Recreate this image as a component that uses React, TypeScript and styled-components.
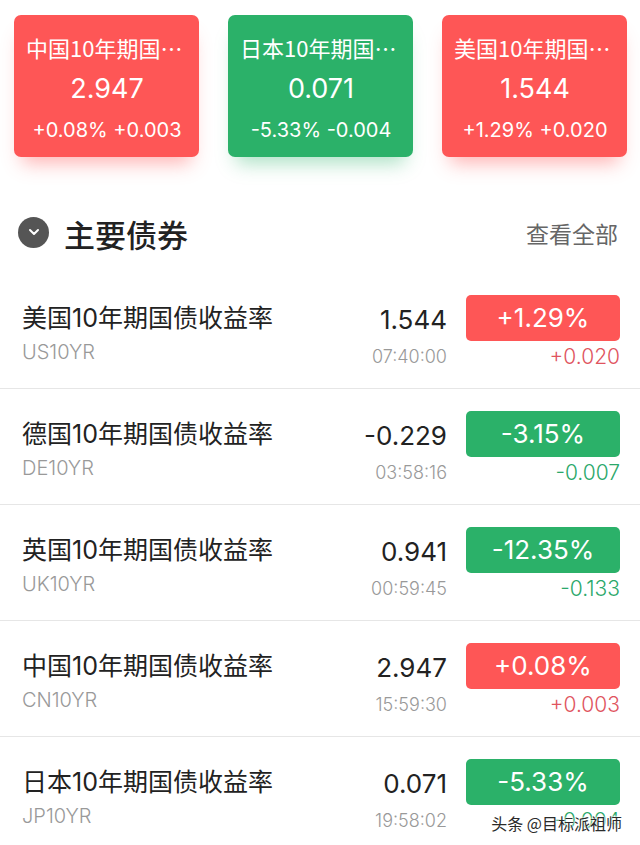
import styled, { createGlobalStyle } from "styled-components";

const GlobalStyle = createGlobalStyle`
  html, body {
    margin: 0;
    padding: 0;
    background: #ffffff;
  }
  body {
    font-family: "Inter", "Noto Sans CJK SC", sans-serif;
    -webkit-font-smoothing: antialiased;
  }
`;

const RED = "#fe5656";
const GREEN = "#2bb169";

type Trend = "up" | "down";

interface Bond {
  name: string;
  code: string;
  price: string;
  time: string;
  percent: string;
  change: string;
  trend: Trend;
}

const cards: Bond[] = [
  { name: "中国10年期国债收益率", code: "CN10YR", price: "2.947", time: "15:59:30", percent: "+0.08%", change: "+0.003", trend: "up" },
  { name: "日本10年期国债收益率", code: "JP10YR", price: "0.071", time: "19:58:02", percent: "-5.33%", change: "-0.004", trend: "down" },
  { name: "美国10年期国债收益率", code: "US10YR", price: "1.544", time: "07:40:00", percent: "+1.29%", change: "+0.020", trend: "up" },
];

const bonds: Bond[] = [
  cards[2],
  { name: "德国10年期国债收益率", code: "DE10YR", price: "-0.229", time: "03:58:16", percent: "-3.15%", change: "-0.007", trend: "down" },
  { name: "英国10年期国债收益率", code: "UK10YR", price: "0.941", time: "00:59:45", percent: "-12.35%", change: "-0.133", trend: "down" },
  cards[0],
  cards[1],
];

const Page = styled.div`
  position: relative;
  width: 640px;
  height: 845px;
  overflow: hidden;
  background: #ffffff;
`;

const CardRow = styled.div`
  display: flex;
  gap: 29px;
  padding: 15px 13px 0 14px;
`;

const Card = styled.div<{ $trend: Trend }>`
  width: 185px;
  height: 142px;
  box-sizing: border-box;
  padding: 16px 11px 0 12px;
  border-radius: 7px;
  color: #ffffff;
  text-align: center;
  background: ${(p) => (p.$trend === "up" ? RED : GREEN)};
  box-shadow: 0 14px 18px -8px
    ${(p) => (p.$trend === "up" ? "rgba(254, 86, 86, 0.45)" : "rgba(43, 177, 105, 0.4)")};
`;

const CardTitle = styled.div`
  font-family: "Noto Sans CJK SC", sans-serif;
  font-size: 22px;
  line-height: 32px;
  white-space: nowrap;
  overflow: hidden;
  text-overflow: ellipsis;
`;

const CardValue = styled.div`
  margin-top: 8px;
  font-size: 27px;
  line-height: 36px;
`;

const CardChange = styled.div`
  margin-top: 9px;
  font-size: 20px;
  line-height: 28px;
`;

const Header = styled.div`
  display: flex;
  align-items: center;
  height: 44px;
  margin-top: 54px;
  padding: 0 22px 0 18px;
`;

const Toggle = styled.div`
  width: 31px;
  height: 31px;
  border-radius: 50%;
  background: #555555;
  display: flex;
  align-items: center;
  justify-content: center;
  margin-top: -2px;
`;

const Title = styled.h2`
  margin: 0 0 0 15px;
  font-family: "Noto Sans CJK SC", sans-serif;
  font-size: 31px;
  font-weight: 500;
  color: #222222;
  flex: 1;
`;

const MoreLink = styled.span`
  font-family: "Noto Sans CJK SC", sans-serif;
  font-size: 23px;
  color: #666666;
`;

const List = styled.div`
  margin-top: 18px;
`;

const Row = styled.div`
  display: flex;
  justify-content: space-between;
  height: 116px;
  box-sizing: border-box;
  padding: 22px 20px 0 22px;
  border-bottom: 1px solid #e6e6e6;
`;

const Info = styled.div`
  display: flex;
  flex-direction: column;
  padding-top: 7px;
`;

const Name = styled.div`
  font-size: 25px;
  line-height: 32px;
  color: #222222;
`;

const Code = styled.div`
  margin-top: 6px;
  font-size: 20px;
  font-weight: 300;
  line-height: 24px;
  color: #999999;
`;

const Quote = styled.div`
  display: grid;
  grid-template-columns: auto 154px;
  grid-template-rows: 46px 24px;
  column-gap: 19px;
  row-gap: 4px;
  justify-items: end;
  align-items: center;
`;

const Price = styled.div`
  padding-top: 3px;
  font-size: 26px;
  line-height: 40px;
  color: #222222;
`;

const Badge = styled.div<{ $trend: Trend }>`
  width: 154px;
  height: 46px;
  border-radius: 5px;
  background: ${(p) => (p.$trend === "up" ? RED : GREEN)};
  color: #ffffff;
  font-size: 26px;
  line-height: 46px;
  text-align: center;
`;

const Time = styled.div`
  font-size: 18px;
  font-weight: 300;
  line-height: 24px;
  color: #999999;
`;

const Change = styled.div<{ $trend: Trend }>`
  font-size: 21px;
  font-weight: 300;
  line-height: 24px;
  color: ${(p) => (p.$trend === "up" ? "#e0545e" : "#2ba86a")};
`;

const Watermark = styled.div`
  position: absolute;
  right: 18px;
  top: 811px;
  font-family: "Noto Sans CJK SC", sans-serif;
  font-size: 16px;
  line-height: 24px;
  color: #2a2a2a;
  text-shadow: 0 0 2px #ffffff, 0 0 2px #ffffff, 0 0 3px #ffffff;
`;

const ChevronDown = () => (
  <svg width="12" height="8" viewBox="0 0 12 8">
    <path d="M2 2l4 4 4-4" fill="none" stroke="#ffffff" strokeWidth="2" strokeLinecap="round" strokeLinejoin="round" />
  </svg>
);

export default function App() {
  return (
    <Page>
      <GlobalStyle />
      <CardRow>
        {cards.map((c) => (
          <Card key={c.code} $trend={c.trend}>
            <CardTitle>{c.name}</CardTitle>
            <CardValue>{c.price}</CardValue>
            <CardChange>
              {c.percent} {c.change}
            </CardChange>
          </Card>
        ))}
      </CardRow>
      <Header>
        <Toggle>
          <ChevronDown />
        </Toggle>
        <Title>主要债券</Title>
        <MoreLink>查看全部</MoreLink>
      </Header>
      <List>
        {bonds.map((b) => (
          <Row key={b.code}>
            <Info>
              <Name>{b.name}</Name>
              <Code>{b.code}</Code>
            </Info>
            <Quote>
              <Price>{b.price}</Price>
              <Badge $trend={b.trend}>{b.percent}</Badge>
              <Time>{b.time}</Time>
              <Change $trend={b.trend}>{b.change}</Change>
            </Quote>
          </Row>
        ))}
      </List>
      <Watermark>头条 @目标派祖师</Watermark>
    </Page>
  );
}
